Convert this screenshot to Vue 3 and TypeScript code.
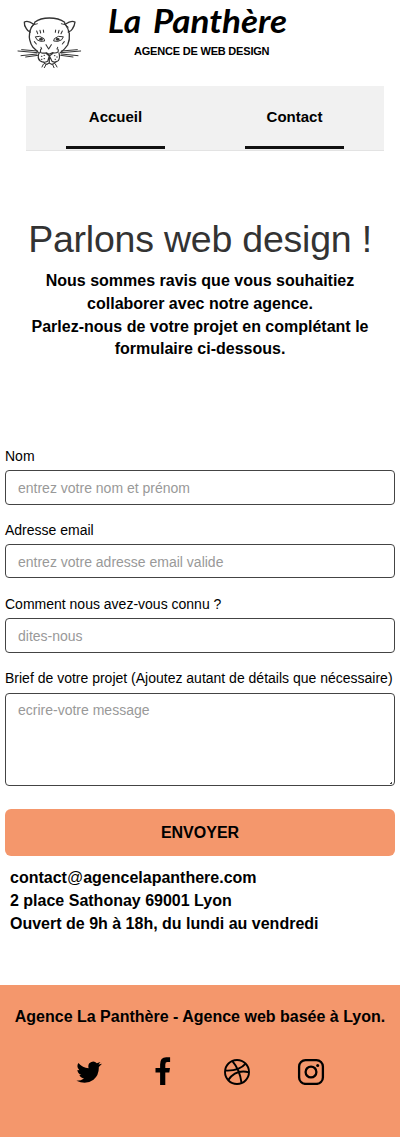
<script setup lang="ts">
interface Field {
  id: string
  label: string
  placeholder: string
}

const links: string[] = ['Accueil', 'Contact']

const fields: Field[] = [
  { id: 'nom', label: 'Nom', placeholder: 'entrez votre nom et prénom' },
  { id: 'email', label: 'Adresse email', placeholder: 'entrez votre adresse email valide' },
  { id: 'source', label: 'Comment nous avez-vous connu ?', placeholder: 'dites-nous' },
]
</script>

<template>
  <div class="page">
    <header class="brand">
      <svg class="panther" viewBox="45 45 210 165" fill="none" stroke="#333" stroke-width="4" stroke-linecap="round" stroke-linejoin="round">
        <path d="M104 67Q121 54 148 54Q176 54 194 67M100 72Q84 60 73 66Q72 76 79 86Q83 94 91 96M197 72Q213 60 225 66Q224 77 217 87Q213 94 205 96M104 70Q91 83 89 98Q87 112 89 119Q92 133 99 142Q109 151 115 158M194 70Q205 84 208 101Q210 119 203 135Q195 147 181 158" />
        <path d="M93 81Q101 72 112 71M205 81Q197 72 184 71" stroke-width="2.8" />
        <path d="M107 110Q119 105 132 116L134 123Q121 127 112 120ZM189 110Q174 105 163 116L161 123Q174 127 184 120Z" stroke-width="3" />
        <ellipse cx="123" cy="118" rx="4" ry="2" /><ellipse cx="173" cy="118" rx="4" ry="2" />
        <path d="M110 93L113 101M120 91L122 99M130 90L131 97M167 90L166 97M177 91L175 99M187 93L183 101M138 134L146 147L154 134M103 125L109 132M193 125L187 132M123 142L125 147M173 142L171 147" stroke-width="3.2" />
        <path d="M122 148Q120 155 123 158Q132 161 139 158L147 163L157 158Q167 161 174 156Q176 153 174 148M119 158Q115 161 115 168Q113 177 121 183Q131 190 143 184L148 167L156 184Q165 190 175 182Q181 173 177 159M138 160L148 168L159 160M131 186Q132 192 141 193L147 189L155 193Q165 192 168 184M148 169V188" stroke-width="3.4" />
        <path d="M113 153L65 149M111 158L54 153M111 162L63 167M114 166L77 171M184 153L232 149M184 158L242 153M184 162L234 167M182 166L219 171M130 193L126 201M138 194L133 203M158 194L162 203M166 192L171 201" stroke-width="3" />
        <path d="M124 169H126M132 166H134M132 176H134M124 178H126M163 167H165M170 171H172M165 178H167" stroke-width="3" />
      </svg>
      <div class="brand-copy">
        <svg class="wordmark" width="190" height="44" viewBox="0 0 190 44" role="img" aria-label="La Panthère">
          <text x="5" y="33" textLength="33" lengthAdjust="spacingAndGlyphs">La</text>
          <text x="50" y="33" textLength="134" lengthAdjust="spacingAndGlyphs">Panthère</text>
        </svg>
        <p class="tagline">AGENCE DE WEB DESIGN</p>
      </div>
    </header>

    <nav class="nav">
      <a v-for="link in links" :key="link" class="nav-link">{{ link }}</a>
    </nav>

    <main>
      <section class="intro">
        <h1>Parlons web design !</h1>
        <p>Nous sommes ravis que vous souhaitiez<br />collaborer avec notre agence.<br />Parlez-nous de votre projet en complétant le<br />formulaire ci-dessous.</p>
      </section>

      <form class="form" @submit.prevent>
        <div v-for="field in fields" :key="field.id" class="field" :class="field.id">
          <label :for="field.id">{{ field.label }}</label>
          <input :id="field.id" type="text" :placeholder="field.placeholder" />
        </div>
        <div class="field message">
          <label for="brief">Brief de votre projet (Ajoutez autant de détails que nécessaire)</label>
          <textarea id="brief" placeholder="ecrire-votre message"></textarea>
        </div>
        <button type="submit">ENVOYER</button>
      </form>

      <address>
        <span>contact<span class="at">@</span>agencelapanthere.com</span>
        <span>2 place Sathonay 69001 Lyon</span>
        <span>Ouvert de 9h à 18h, du lundi au vendredi</span>
      </address>
    </main>

    <footer class="footer">
      <p>Agence La Panthère - Agence web basée à Lyon.</p>
      <div class="socials">
        <svg viewBox="0 0 28 28"><path fill="#000" d="M27 5.8L23.8 9Q24.2 17 18.5 21.7Q11 27.3 1.4 22.7Q6.5 22.5 9 20.4Q5.5 20 4.4 17H6.4Q2.5 15.3 2.4 11.9L4.4 12.3Q1 9 3.4 5.1Q7.6 10 13.6 10.2Q12.4 5.4 16.4 4Q19.5 2.8 21.8 5.3L25.4 4L23.5 6.5Z" transform="translate(0 1)" /></svg>
        <svg viewBox="0 0 28 28"><path fill="#000" d="M11.1 28V15.5H6.5V11H11.1V7.4Q11.1 .2 17.2 .2H21.1V5H18.3Q16.3 5 16.3 7.4V11H21L20.3 15.5H16.3V28Z" /></svg>
        <svg viewBox="0 0 28 28" fill="none" stroke="#000" stroke-width="1.9"><circle cx="14" cy="15" r="12" /><path d="M9.4 4.1Q17 13 18.5 25.9M2.2 13.5Q16 14.3 22.6 6.6M5.2 23.1Q12.7 12 26 15.3" /></svg>
        <svg viewBox="0 0 28 28" fill="none" stroke="#000" stroke-width="2.3"><rect x="2.1" y="3.1" width="23.8" height="23.8" rx="6.5" /><circle cx="14" cy="15" r="5.4" /><circle cx="20.7" cy="8.4" r="1.5" fill="#000" stroke="none" /></svg>
      </div>
    </footer>
  </div>
</template>

<style>
html, body { margin: 0; background: #fff; }
</style>

<style scoped>
* { box-sizing: border-box; }
.page { width: 400px; height: 1137px; display: flex; flex-direction: column; color: #000; font-family: "Liberation Sans", Arial, sans-serif; }
p, h1 { margin: 0; }
.brand { height: 86px; display: flex; }
.panther { width: 70px; height: 55px; margin: 15px 0 0 15px; flex: none; }
.brand-copy { width: 190px; margin-left: 18px; }
.wordmark { display: block; overflow: visible; }
.wordmark text { font-family: Lato, sans-serif; font-style: italic; font-weight: 700; font-size: 33px; }
.tagline { margin-left: 31px; font-size: 11px; line-height: 14px; font-weight: 700; letter-spacing: -0.2px; white-space: nowrap; }
.nav { width: 358px; height: 65px; margin-left: 26px; display: grid; grid-template-columns: 1fr 1fr; align-items: start; justify-items: center; background: #f1f1f1; border-bottom: 1px solid #e3e3e3; flex: none; }
.nav-link { width: 99px; height: 63px; border-bottom: 3px solid #111; text-align: center; font-size: 15px; line-height: 61px; font-weight: 700; }
.intro { height: 294px; padding-top: 66px; text-align: center; white-space: nowrap; }
.intro h1 { font-size: 37.5px; font-weight: 400; line-height: 44px; letter-spacing: -0.22px; color: #333; margin-bottom: 9px; }
.intro p { font-size: 16px; line-height: 22.8px; font-weight: 700; }
.form { padding: 0 5px; }
.field { height: 74px; }
.field label { display: block; height: 25px; font-size: 14px; line-height: 22px; white-space: nowrap; }
input, textarea { display: block; width: 390px; height: 35px; border: 1px solid #444; border-radius: 4px; padding: 1px 12px 0; background: #fff; color: #000; font: 14px "Liberation Sans", Arial, sans-serif; outline: none; }
.email input { height: 34px; padding-top: 2px; }
textarea { padding: 8px 12px; resize: none; }
input::placeholder, textarea::placeholder { color: #999; opacity: 1; }
.field.message { position: relative; height: 142px; }
/* Resize grip in the corner of the message box */
.message::after { content: ""; position: absolute; right: 3px; top: 115px; width: 2px; height: 2px; background: linear-gradient(135deg, transparent 45%, #444 45%); }
.message label { height: 26px; }
.message textarea { height: 93px; }
button { display: block; width: 390px; height: 47px; border: 0; border-radius: 6px; padding: 0; background: #f4976c; color: #000; font: 700 16px "Liberation Sans", Arial, sans-serif; }
address { display: flex; flex-direction: column; align-items: flex-start; padding: 11px 0 0 10px; font-style: normal; font-weight: 700; font-size: 16px; line-height: 22.9px; }
.at { font-weight: 400; }
.footer { height: 152px; margin-top: auto; background: #f4976c; flex: none; }
.footer p { padding-top: 20px; text-align: center; font-size: 16px; line-height: 23px; font-weight: 700; white-space: nowrap; }
.socials { display: flex; justify-content: center; gap: 46px; padding-top: 29px; }
.socials svg { width: 28px; height: 28px; }
</style>
